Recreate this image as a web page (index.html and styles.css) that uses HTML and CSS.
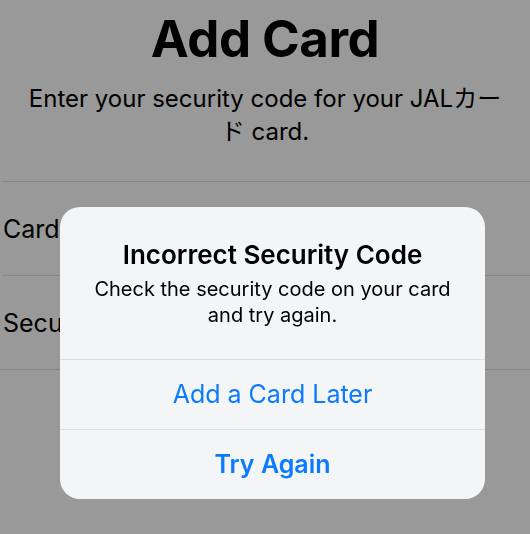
FILE: index.html
```html
<!DOCTYPE html>
<html>
<head>
    <title>Add Card</title>
    <link rel="stylesheet" href="styles.css">
</head>
<body>
    <div class="page">
        <div class="header">
            <h1>Add Card</h1>
            <p class="subtitle">Enter your security code for your JALカード card.</p>
        </div>
        <div class="form">
            <div class="row">Card Number</div>
            <div class="row">Security Code</div>
        </div>
    </div>

    <div class="overlay">
        <div class="alert">
            <div class="alert-body">
                <div class="alert-title">Incorrect Security Code</div>
                <div class="alert-message">Check the security code on your card and try again.</div>
            </div>
            <button class="alert-button">Add a Card Later</button>
            <button class="alert-button preferred">Try Again</button>
        </div>
    </div>
</body>
</html>
```

FILE: styles.css
```css
body {
    margin: 0;
    font-family: Inter, "Noto Sans CJK JP", sans-serif;
    color: #000;
    background-color: #fff;
}

.header {
    padding-top: 9px;
    text-align: center;
}

h1 {
    margin: 0;
    font-size: 51px;
    line-height: 60px;
    font-weight: 700;
    letter-spacing: -0.5px;
}

.subtitle {
    margin: 13px auto 0;
    width: 488px;
    font-size: 24px;
    line-height: 33px;
    font-weight: 400;
}

.form {
    margin-top: 33px;
    border-bottom: 1px solid #dedede;
}

.row {
    border-top: 1px solid #dedede;
    margin-left: 2px;
    padding: 32px 0 31px 1px;
    font-size: 25px;
    line-height: 30px;
    white-space: nowrap;
    overflow: hidden;
}

.overlay {
    position: fixed;
    top: 0;
    left: 0;
    right: 0;
    bottom: 0;
    background-color: rgba(0, 0, 0, 0.4);
    padding: 207px 0 0 60px;
}

.alert {
    width: 425px;
    border-radius: 20px;
    background-color: #f4f5f6;
    overflow: hidden;
    text-align: center;
}

.alert-body {
    padding: 33px 20px 31px;
}

.alert-title {
    font-size: 26px;
    line-height: 30px;
    font-weight: 600;
}

.alert-message {
    margin-top: 6px;
    padding: 0 8px;
    font-size: 20px;
    line-height: 26px;
}

.alert-button {
    display: block;
    width: 100%;
    height: 70px;
    border: none;
    border-top: 1px solid #dcdde0;
    background: none;
    padding: 0;
    font-family: inherit;
    font-size: 25px;
    line-height: 69px;
    color: #0a7aff;
    cursor: pointer;
}

.alert-button.preferred {
    font-weight: 600;
}
```
